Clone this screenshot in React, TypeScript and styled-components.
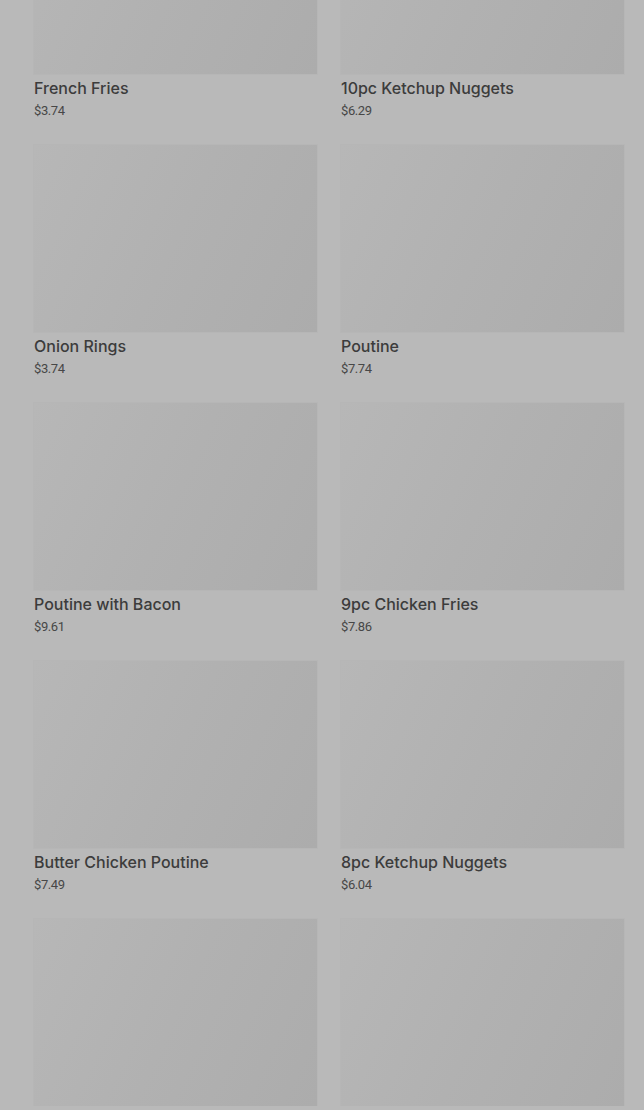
import styled, { createGlobalStyle } from "styled-components";

const GlobalStyle = createGlobalStyle`
  body {
    margin: 0;
    background: #b9b9b9;
    font-family: Inter, "Noto Sans", sans-serif;
  }
`;

const Grid = styled.div`
  display: grid;
  grid-template-columns: 283px 283px;
  column-gap: 24px;
  row-gap: 25px;
  padding: 0 20px 0 34px;
  margin-top: -113px;
`;

const Card = styled.div`
  display: flex;
  flex-direction: column;
`;

const Thumb = styled.div`
  height: 187px;
  background: linear-gradient(115deg, #b7b7b7 0%, #b1b1b1 50%, #acacac 100%);
  box-shadow: 0 0 0 1px rgba(0, 0, 0, 0.015);
`;

const Name = styled.p`
  margin: 4px 0 0;
  font-size: 16px;
  line-height: 20px;
  font-weight: 500;
  color: #3c3c3c;
`;

const Price = styled.p`
  margin: 4px 0 0;
  font-family: Roboto, "Liberation Sans", sans-serif;
  font-size: 13px;
  line-height: 18px;
  letter-spacing: -0.4px;
  color: #474747;
`;

const items = [
  { name: "French Fries", price: 3.74 },
  { name: "10pc Ketchup Nuggets", price: 6.29 },
  { name: "Onion Rings", price: 3.74 },
  { name: "Poutine", price: 7.74 },
  { name: "Poutine with Bacon", price: 9.61 },
  { name: "9pc Chicken Fries", price: 7.86 },
  { name: "Butter Chicken Poutine", price: 7.49 },
  { name: "8pc Ketchup Nuggets", price: 6.04 },
];

export default function App() {
  return (
    <>
      <GlobalStyle />
      <Grid>
        {items.map((item) => (
          <Card key={item.name}>
            <Thumb />
            <Name>{item.name}</Name>
            <Price>${item.price.toFixed(2)}</Price>
          </Card>
        ))}
        {/* next row, still loading below the fold */}
        <Card>
          <Thumb />
        </Card>
        <Card>
          <Thumb />
        </Card>
      </Grid>
    </>
  );
}
